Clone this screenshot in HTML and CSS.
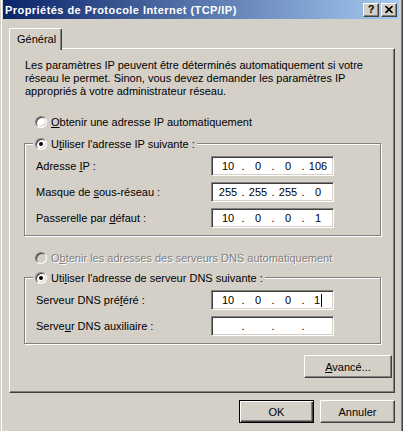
FILE: index.html
```html
<!DOCTYPE html>
<html lang="fr">
<head>
<meta charset="utf-8">
<link rel="stylesheet" href="styles.css">
</head>
<body>
<div class="window">
  <div class="titlebar">
    <span class="title">Propriétés de Protocole Internet (TCP/IP)</span>
    <div class="tbtns">
      <span class="tbtn help">?</span>
      <span class="tbtn close"><svg width="8" height="7" viewBox="0 0 8 7"><path d="M0.5 0 L7.5 7 M7.5 0 L0.5 7" stroke="#000" stroke-width="1.6" fill="none"/></svg></span>
    </div>
  </div>
  <div class="tabs"><div class="tab">Général</div></div>
  <div class="panel">
    <p class="intro">Les paramètres IP peuvent être déterminés automatiquement si votre réseau le permet. Sinon, vous devez demander les paramètres IP appropriés à votre administrateur réseau.</p>
    <div class="opt"><span class="radio"></span><span><u>O</u>btenir une adresse IP automatiquement</span></div>
    <fieldset class="group g1">
      <legend><span class="radio on"></span><span>U<u>t</u>iliser l'adresse IP suivante :</span></legend>
      <div class="row"><span class="lbl">Adresse <u>I</u>P :</span><div class="ip"><span class="oct">10</span><span class="dot">.</span><span class="oct">0</span><span class="dot">.</span><span class="oct">0</span><span class="dot">.</span><span class="oct">106</span></div></div>
      <div class="row"><span class="lbl">Masque de <u>s</u>ous-réseau :</span><div class="ip"><span class="oct">255</span><span class="dot">.</span><span class="oct">255</span><span class="dot">.</span><span class="oct">255</span><span class="dot">.</span><span class="oct">0</span></div></div>
      <div class="row"><span class="lbl">Passerelle par <u>d</u>éfaut :</span><div class="ip"><span class="oct">10</span><span class="dot">.</span><span class="oct">0</span><span class="dot">.</span><span class="oct">0</span><span class="dot">.</span><span class="oct">1</span></div></div>
    </fieldset>
    <div class="opt disabled"><span class="radio"></span><span>O<u>b</u>tenir les adresses des serveurs DNS automatiquement</span></div>
    <fieldset class="group g2">
      <legend><span class="radio on"></span><span>Uti<u>l</u>iser l'adresse de serveur DNS suivante :</span></legend>
      <div class="row"><span class="lbl">Serveur DNS pré<u>f</u>éré :</span><div class="ip"><span class="oct">10</span><span class="dot">.</span><span class="oct">0</span><span class="dot">.</span><span class="oct">0</span><span class="dot">.</span><span class="oct">1<span class="caret"></span></span></div></div>
      <div class="row"><span class="lbl">Serve<u>u</u>r DNS auxiliaire :</span><div class="ip"><span class="oct"></span><span class="dot">.</span><span class="oct"></span><span class="dot">.</span><span class="oct"></span><span class="dot">.</span><span class="oct"></span></div></div>
    </fieldset>
    <div class="adv"><button class="btn advbtn"><u>A</u>vancé...</button></div>
  </div>
  <div class="actions">
    <button class="btn default">OK</button>
    <button class="btn">Annuler</button>
  </div>
</div>
</body>
</html>
```
FILE: styles.css
```css
* { box-sizing: border-box; }
html, body { margin: 0; padding: 0; background: #d4d0c8; }
body { font-family: "Liberation Sans", Arial, sans-serif; font-size: 11px; color: #000; }
.window {
  width: 403px; height: 431px; overflow: hidden;
  background: #d4d0c8;
  padding: 0 4px 0 3px;
  background-image: linear-gradient(to right, #d4d0c8 1px, #fff 1px, #fff 2px, transparent 2px),
                    linear-gradient(to left, #404040 1px, #808080 1px, #808080 2px, transparent 2px);
}
.titlebar {
  height: 19px;
  background: linear-gradient(to right, #0a246a, #a6caf0);
  display: flex; align-items: center; justify-content: space-between;
  padding: 0 2px 0 2px;
}
.title { color: #fff; font-weight: bold; font-size: 11px; letter-spacing: 0.45px; white-space: nowrap; }
.tbtns { display: flex; gap: 2px; }
.tbtn {
  width: 16px; height: 14px; background: #d4d0c8;
  border: 1px solid; border-color: #fff #404040 #404040 #fff;
  box-shadow: inset -1px -1px #808080;
  display: flex; align-items: center; justify-content: center;
  font-weight: bold; font-size: 11px; line-height: 1;
}
.tabs { height: 29px; display: flex; align-items: flex-end; padding-left: 6px; }
.tab {
  width: 53px; height: 22px; margin-bottom: -2px; position: relative; z-index: 1;
  background: #d4d0c8;
  border-left: 1px solid #fff; border-top: 1px solid #fff; border-right: 1px solid #404040;
  box-shadow: inset -1px 0 #808080;
  border-top-left-radius: 2px; border-top-right-radius: 2px;
  padding: 4px 0 0 7px;
}
.panel {
  margin-left: 6px; width: 386px; height: 345px;
  border: 1px solid; border-color: #fff #404040 #404040 #fff;
  box-shadow: inset -1px -1px #808080;
  padding: 0 12px 0 14px;
}
.intro { margin: 10px 0 0 1px; line-height: 13px; width: 350px; }
.opt { display: flex; align-items: center; height: 13px; margin: 17px 0 0 11px; }
.opt > .radio { margin-right: 4px; }
.opt.disabled { color: #808080; text-shadow: 1px 1px 0 #fff; margin-top: 15px; }
.opt.disabled .radio { background: #d4d0c8; }
.radio {
  display: inline-block; width: 12px; height: 12px; border-radius: 50%;
  border: 1px solid; border-color: #808080 #fff #fff #808080;
  background: #fff; position: relative; flex: none;
  box-shadow: inset 1px 1px #404040, inset -1px -1px #d4d0c8;
}
.radio.on::after {
  content: ""; position: absolute; left: 3px; top: 3px; width: 4px; height: 4px;
  border-radius: 50%; background: #000;
}
.group {
  margin: 0; padding: 0 0 7px 11px; width: 357px;
  border: 1px solid #808080;
  box-shadow: inset 1px 1px #fff, 1px 1px #fff;
}
.g1 { margin-top: 9px; }
.g2 { margin-top: 7px; }
.group legend {
  margin-left: -3px; padding: 0 2px; background: #d4d0c8;
  display: flex; align-items: center; height: 13px;
}
.group legend .radio { margin-right: 4px; }
.row { display: flex; align-items: center; height: 20px; margin-top: 6px; }
.lbl { width: 175px; }
.ip {
  width: 123px; height: 20px; background: #fff;
  border: 1px solid; border-color: #808080 #fff #fff #808080;
  box-shadow: inset 1px 1px #404040, inset -1px -1px #d4d0c8;
  display: flex; align-items: center; padding-left: 3px;
}
.oct { width: 26px; text-align: center; display: inline-flex; justify-content: center; align-items: center; }
.dot { width: 4px; text-align: center; }
.caret { display: inline-block; width: 1px; height: 13px; background: #000; margin-left: 1px; }
.adv { display: flex; justify-content: flex-end; width: 368px; margin-top: 11px; }
.btn {
  font: inherit; color: #000; background: #d4d0c8; padding: 0;
  width: 75px; height: 23px;
  border: 1px solid; border-color: #fff #404040 #404040 #fff;
  box-shadow: inset -1px -1px #808080;
}
.advbtn { width: 88px; }
.btn.default {
  border-color: #000;
  box-shadow: inset 1px 1px #fff, inset -1px -1px #404040, inset -2px -2px #808080;
}
.actions { display: flex; justify-content: flex-end; gap: 6px; margin-top: 7px; width: 392px; }
```
